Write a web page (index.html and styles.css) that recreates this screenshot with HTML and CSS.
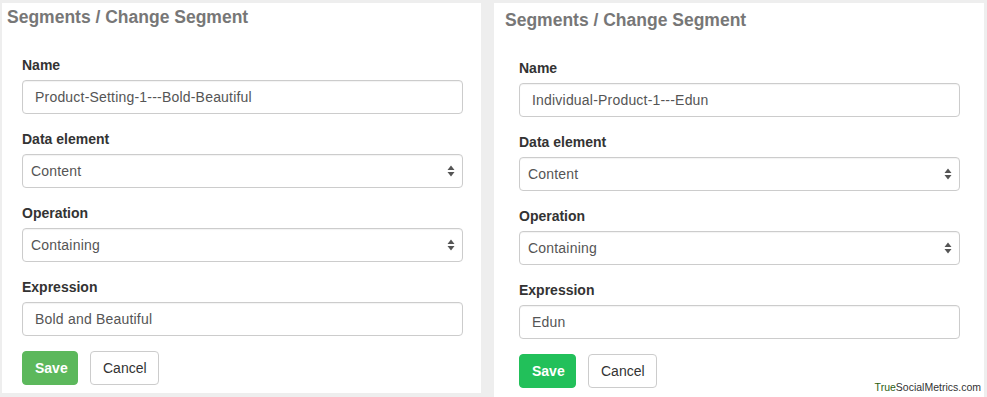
FILE: index.html
```html
<!DOCTYPE html>
<html>
<head>
<meta charset="utf-8">
<link rel="stylesheet" href="styles.css">
</head>
<body>
<div class="page">
  <section class="panel panel-left">
    <h2 class="title">Segments / Change Segment</h2>
    <form class="form">
      <div class="group">
        <label class="label">Name</label>
        <div class="control">Product-Setting-1---Bold-Beautiful</div>
      </div>
      <div class="group">
        <label class="label">Data element</label>
        <div class="control select">Content
          <svg class="arrows" width="8" height="12" viewBox="0 0 8 12"><path d="M4 0.5L7.5 5H0.5Z M4 11.5L7.5 7H0.5Z" fill="#555"/></svg>
        </div>
      </div>
      <div class="group">
        <label class="label">Operation</label>
        <div class="control select">Containing
          <svg class="arrows" width="8" height="12" viewBox="0 0 8 12"><path d="M4 0.5L7.5 5H0.5Z M4 11.5L7.5 7H0.5Z" fill="#555"/></svg>
        </div>
      </div>
      <div class="group">
        <label class="label">Expression</label>
        <div class="control">Bold and Beautiful</div>
      </div>
      <div class="buttons">
        <button class="btn btn-save" type="button">Save</button>
        <button class="btn btn-cancel" type="button">Cancel</button>
      </div>
    </form>
  </section>
  <section class="panel panel-right">
    <h2 class="title">Segments / Change Segment</h2>
    <form class="form">
      <div class="group">
        <label class="label">Name</label>
        <div class="control">Individual-Product-1---Edun</div>
      </div>
      <div class="group">
        <label class="label">Data element</label>
        <div class="control select">Content
          <svg class="arrows" width="8" height="12" viewBox="0 0 8 12"><path d="M4 0.5L7.5 5H0.5Z M4 11.5L7.5 7H0.5Z" fill="#555"/></svg>
        </div>
      </div>
      <div class="group">
        <label class="label">Operation</label>
        <div class="control select">Containing
          <svg class="arrows" width="8" height="12" viewBox="0 0 8 12"><path d="M4 0.5L7.5 5H0.5Z M4 11.5L7.5 7H0.5Z" fill="#555"/></svg>
        </div>
      </div>
      <div class="group">
        <label class="label">Expression</label>
        <div class="control">Edun</div>
      </div>
      <div class="buttons">
        <button class="btn btn-save btn-save-bright" type="button">Save</button>
        <button class="btn btn-cancel" type="button">Cancel</button>
      </div>
    </form>
    <div class="watermark"><span class="wm-true">True</span>SocialMetrics.com</div>
  </section>
</div>
</body>
</html>
```

FILE: styles.css
```css
html, body {
  margin: 0;
  padding: 0;
  background: #eeeeee;
  font-family: "Liberation Sans", Arial, sans-serif;
  color: #333;
}
.page {
  display: flex;
  align-items: flex-start;
  gap: 13px;
  padding: 3px 0 0 2px;
  height: 394px;
  overflow: hidden;
}
.panel {
  background: #fff;
  box-sizing: border-box;
  position: relative;
}
.panel-left {
  width: 479px;
  height: 390px;
  padding: 0 18px 0 20px;
}
.panel-right {
  width: 490px;
  height: 400px;
  padding: 3px 24px 0 25px;
}
.title {
  margin: 0;
  font-size: 17.5px;
  line-height: 20px;
  font-weight: 700;
  color: #777;
  padding-top: 4px;
}
.panel-left .title { margin-left: -15px; }
.panel-right .title { margin-left: -14px; }
.form {
  margin-top: 28px;
}
.group {
  margin-bottom: 15px;
}
.label {
  display: block;
  font-size: 14px;
  font-weight: 700;
  line-height: 20px;
  margin-bottom: 5px;
  color: #333;
}
.control {
  box-sizing: border-box;
  height: 34px;
  border: 1px solid #ccc;
  border-radius: 4px;
  padding: 0 12px;
  font-size: 14px;
  letter-spacing: 0.2px;
  line-height: 32px;
  color: #555;
  display: flex;
  align-items: center;
  justify-content: space-between;
  box-shadow: inset 0 1px 1px rgba(0,0,0,0.05);
}
.select {
  padding-left: 8px;
  padding-right: 7px;
}
.arrows {
  display: block;
}
.buttons {
  display: flex;
  gap: 12px;
}
.btn {
  box-sizing: border-box;
  height: 34px;
  padding: 0 12px;
  font-family: "Liberation Sans", Arial, sans-serif;
  font-size: 14px;
  border-radius: 4px;
  border: 1px solid #ccc;
  background: #fff;
  color: #333;
}
.btn-save {
  background: #5cb85c;
  border-color: #5cb85c;
  color: #fff;
  font-weight: 700;
  width: 56px;
}
.btn-save-bright {
  background: #22c05a;
  border-color: #22c05a;
  width: 57px;
}
.btn-cancel {
  width: 69px;
}
.watermark {
  position: absolute;
  right: 3px;
  bottom: 10px;
  font-size: 10.5px;
  color: #333;
}
.wm-true {
  color: #2e6012;
}
```
